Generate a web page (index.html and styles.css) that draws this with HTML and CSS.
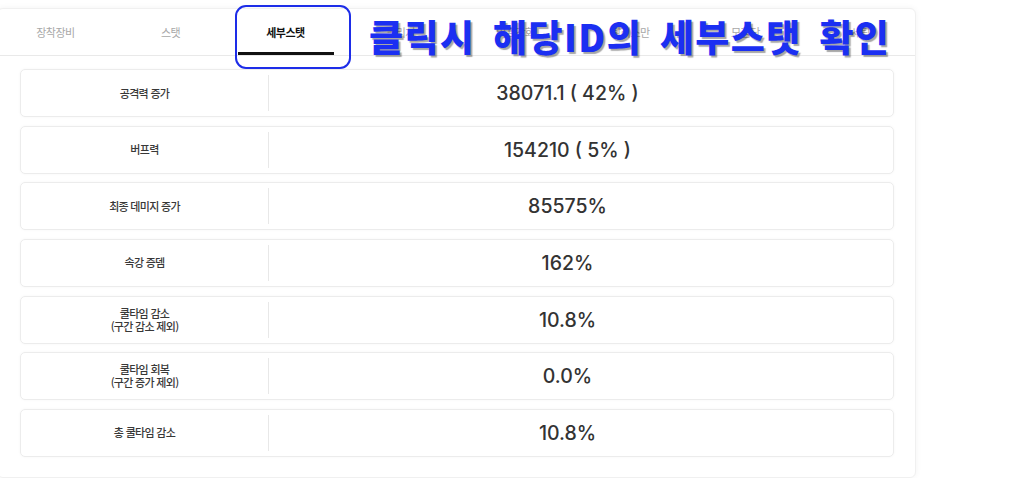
FILE: index.html
```html
<!DOCTYPE html>
<html lang="ko">
<head>
  <meta charset="UTF-8" />
  <title>세부스탯</title>
  <link rel="stylesheet" href="styles.css">
</head>
<body>
  <div class="panel">
    <div class="tabs">
      <div class="tab">장착장비</div>
      <div class="tab">스탯</div>
      <div class="tab active">세부스탯</div>
      <div class="tab">크리쳐</div>
      <div class="tab">버프강화</div>
      <div class="tab">탈리스만</div>
      <div class="tab">모험단</div>
      <div class="tab">세팅</div>
    </div>

    <div class="stat-list">
      <div class="stat-row">
        <div class="stat-label">공격력 증가</div>
        <div class="stat-value">38071.1 ( 42% )</div>
      </div>
      <div class="stat-row">
        <div class="stat-label">버프력</div>
        <div class="stat-value">154210 ( 5% )</div>
      </div>
      <div class="stat-row">
        <div class="stat-label">최종 데미지 증가</div>
        <div class="stat-value">85575%</div>
      </div>
      <div class="stat-row">
        <div class="stat-label">속강 증뎀</div>
        <div class="stat-value">162%</div>
      </div>
      <div class="stat-row">
        <div class="stat-label">쿨타임 감소<br>(구간 감소 제외)</div>
        <div class="stat-value">10.8%</div>
      </div>
      <div class="stat-row">
        <div class="stat-label">쿨타임 회복<br>(구간 증가 제외)</div>
        <div class="stat-value">0.0%</div>
      </div>
      <div class="stat-row">
        <div class="stat-label">총 쿨타임 감소</div>
        <div class="stat-value">10.8%</div>
      </div>
    </div>
  </div>

  <div class="callout-box"></div>
  <div class="callout-text">클릭시 해당ID의 세부스탯 확인</div>
</body>
</html>
```

FILE: styles.css
```css
* {
  box-sizing: border-box;
}
body {
  margin: 0;
  background: #fff;
  font-family: 'Noto Sans CJK KR', 'Noto Sans', sans-serif;
  color: #333;
}
.panel {
  width: 919px;
  margin: 8px 0 0 -3px;
  background: #fff;
  border: 1px solid #f0f0f0;
  border-radius: 6px;
  box-shadow: 0 0 6px rgba(0,0,0,0.05);
}
.tabs {
  display: flex;
  height: 47px;
  border-bottom: 1px solid #e9e9e9;
}
.tab {
  flex: 0 0 115px;
  display: flex;
  align-items: center;
  justify-content: center;
  font-size: 11px;
  letter-spacing: -0.5px;
  color: #a8a8a8;
  position: relative;
}
.tab.active {
  color: #111;
  font-weight: bold;
}
.tab.active::after {
  content: "";
  position: absolute;
  left: 10px;
  right: 9px;
  bottom: 0;
  height: 3px;
  background: #111;
}
.stat-list {
  display: flex;
  flex-direction: column;
  gap: 8.67px;
  padding: 13px 21px 20px 22px;
}
.stat-row {
  display: flex;
  height: 48px;
  border: 1px solid #ececec;
  border-radius: 5px;
  box-shadow: 0 0 3px rgba(0,0,0,0.04);
  padding: 5px 0;
}
.stat-label {
  flex: 0 0 248px;
  display: flex;
  align-items: center;
  justify-content: center;
  text-align: center;
  font-size: 11px;
  line-height: 13px;
  letter-spacing: -0.7px;
  color: #383838;
  font-weight: 500;
  border-right: 1px solid #e8e8e8;
}
.stat-value {
  flex: 1;
  display: flex;
  align-items: center;
  justify-content: center;
  padding-right: 27px;
  font-family: Inter, 'Noto Sans', sans-serif;
  font-size: 19.5px;
  font-weight: 500;
  color: #333;
}
.callout-box {
  position: absolute;
  left: 235px;
  top: 5px;
  width: 116px;
  height: 64px;
  border: 2px solid #1d2de8;
  border-radius: 11px;
}
.callout-text {
  position: absolute;
  left: 369px;
  top: 12px;
  font-size: 37px;
  font-weight: 900;
  letter-spacing: 1.4px;
  word-spacing: 6px;
  line-height: 48px;
  color: #1b2ff2;
  text-shadow: 2px 2px 1px rgba(0,0,0,0.35);
  white-space: nowrap;
}
```
